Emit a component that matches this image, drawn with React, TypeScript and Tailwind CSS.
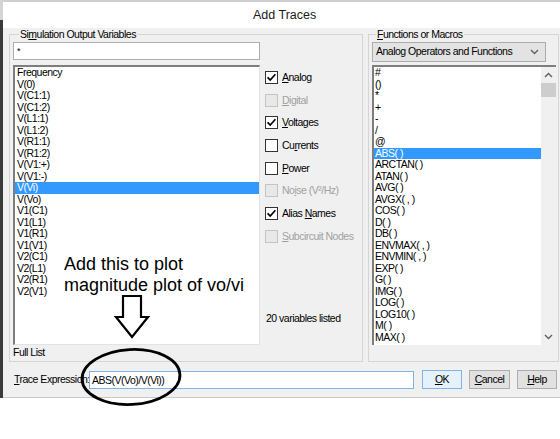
import React from "react";

const leftItems = ["Frequency","V(0)","V(C1:1)","V(C1:2)","V(L1:1)","V(L1:2)","V(R1:1)","V(R1:2)","V(V1:+)","V(V1:-)","V(Vi)","V(Vo)","V1(C1)","V1(L1)","V1(R1)","V1(V1)","V2(C1)","V2(L1)","V2(R1)","V2(V1)"];
const rightItems = ["#","()","*","+","-","/","@","ABS( )","ARCTAN( )","ATAN( )","AVG( )","AVGX( , )","COS( )","D( )","DB( )","ENVMAX( , )","ENVMIN( , )","EXP( )","G( )","IMG( )","LOG( )","LOG10( )","M( )","MAX( )"];

function Check({ checked, disabled, children }: { checked?: boolean; disabled?: boolean; children: React.ReactNode }) {
  return (
    <div className="flex items-center h-[13px] gap-[4px] whitespace-nowrap">
      <div className={`w-[13px] h-[13px] border flex items-center justify-center shrink-0 ${disabled ? "border-[#c4c4c4] bg-[#e8e8e8]" : "border-[#333333] bg-white"}`}>
        {checked && (
          <svg width="11" height="11" viewBox="0 0 11 11">
            <path d="M1.6 5.4 L4.2 8.1 L9.4 2.2" fill="none" stroke="#000" strokeWidth="1.7" />
          </svg>
        )}
      </div>
      <span className={`leading-[13px] ${disabled ? "text-[#a0a0a0]" : ""}`}>{children}</span>
    </div>
  );
}

function Chevron({ up }: { up?: boolean }) {
  return (
    <svg width="9" height="6" viewBox="0 0 9 6">
      <path d={up ? "M1 5 L4.5 1.5 L8 5" : "M1 1 L4.5 4.5 L8 1"} fill="none" stroke="#606060" strokeWidth="1.4" />
    </svg>
  );
}

export default function App() {
  return (
    <div className="relative w-[560px] h-[439px] bg-white overflow-hidden text-[10.5px] tracking-[-0.5px] text-black whitespace-nowrap font-['Liberation_Sans',Arial,sans-serif]">
      <div className="flex h-[398px]">
        <div className="w-[3px] flex flex-col">
          <div className="h-[20px] bg-[#d4d4d4]" />
          <div className="flex-1 bg-[#3a3a3a]" />
        </div>
        <div className="flex-1 flex flex-col border-b border-[#c9c9c9]">
          <div className="h-[28px] bg-white border-t-2 border-[#cfcfcf] flex items-center pl-[250px]">
            <span className="text-[12.5px] tracking-normal text-[#1a1a1a]">Add Traces</span>
          </div>
          <div className="flex-1 bg-[#f0f0f0] flex flex-col">
            <div className="flex pl-[6px] gap-[5px] h-[334px]">
              {/* Left group */}
              <fieldset className="w-[354px] border border-[#d5d5d5] flex flex-col pl-[3px] pb-[3px]">
                <legend className="ml-[6px] px-[1px] leading-[12px]">Si<u>m</u>ulation Output Variables</legend>
                <div className="flex flex-1 gap-[5px]">
                  <div className="w-[247px] flex flex-col">
                    <div className="mt-[2px] h-[18px] bg-white border border-[#abadb3] pl-[3px] leading-[16px] text-[9px]">*</div>
                    <div className="mt-[5px] h-[280px] bg-white border-l-2 border-t-2 border-[#7e7e7e] border-r border-b border-r-[#e3e3e3] border-b-[#e3e3e3] flex flex-col">
                      {leftItems.map((t) => (
                        <div key={t} className={`h-[11.5px] leading-[11.5px] pl-[2px] ${t === "V(Vi)" ? "bg-[#3399ff] text-white" : ""}`}>{t}</div>
                      ))}
                    </div>
                    <div className="mt-[1px] leading-[12px]">Full List</div>
                  </div>
                  <div className="flex-1 flex flex-col pt-[31px] gap-[9.7px]">
                    <Check checked><u>A</u>nalog</Check>
                    <Check disabled><u>D</u>igital</Check>
                    <Check checked><u>V</u>oltages</Check>
                    <Check>Cu<u>r</u>rents</Check>
                    <Check><u>P</u>ower</Check>
                    <Check disabled>No<u>i</u>se (V²/Hz)</Check>
                    <Check checked>Alias <u>N</u>ames</Check>
                    <Check disabled><u>S</u>ubcircuit Nodes</Check>
                    <div className="mt-auto mb-[34px] pl-[1px] leading-[12px]">20 variables listed</div>
                  </div>
                </div>
              </fieldset>
              {/* Right group */}
              <fieldset className="w-[191px] border border-[#d5d5d5] flex flex-col pl-[3px] pr-[2px]">
                <legend className="ml-[4px] px-[1px] leading-[12px]"><u>F</u>unctions or Macros</legend>
                <div className="mt-[2px] w-[174px] h-[20px] bg-[#e3e3e3] border border-[#acacac] flex items-center justify-between pl-[3px] pr-[6px]">
                  <span>Analog Operators and Functions</span>
                  <Chevron />
                </div>
                <div className="mt-[3px] h-[280px] bg-white border-l-2 border-t-2 border-[#7e7e7e] flex">
                  <div className="flex-1 flex flex-col overflow-hidden">
                    {rightItems.map((t) => (
                      <div key={t} className={`h-[11.5px] leading-[11.5px] pl-[1px] ${t === "ABS( )" ? "bg-[#3399ff] text-white" : ""}`}>{t}</div>
                    ))}
                  </div>
                  <div className="w-[15px] bg-[#f0f0f0] flex flex-col items-center">
                    <div className="h-[16px] flex items-center justify-center"><Chevron up /></div>
                    <div className="w-[15px] h-[14px] bg-[#cdcdcd]" />
                    <div className="flex-1" />
                    <div className="h-[16px] flex items-center justify-center"><Chevron /></div>
                  </div>
                </div>
              </fieldset>
            </div>
            <div className="flex-1 flex items-center pl-[11px]">
              <div className="w-[75px]"><u>T</u>race Expression:</div>
              <div className="w-[325px] h-[18px] bg-white border border-[#7eb4ea] pl-[2px] leading-[16px]">ABS(V(Vo)/V(Vi))</div>
              <div className="ml-[8px] w-[40px] h-[19px] bg-[#e5f1fb] border border-[#7eb4ea] flex items-center justify-center"><span><u>O</u>K</span></div>
              <div className="ml-[7px] w-[41px] h-[19px] bg-[#e1e1e1] border border-[#adadad] flex items-center justify-center"><span><u>C</u>ancel</span></div>
              <div className="ml-[7px] w-[40px] h-[19px] bg-[#e1e1e1] border border-[#adadad] flex items-center justify-center"><span><u>H</u>elp</span></div>
            </div>
          </div>
        </div>
      </div>

      {/* Annotation overlay */}
      <div className="absolute left-[64px] top-[254px] text-[18px] leading-[21px] tracking-normal text-black">
        <div>Add this to plot</div>
        <div>magnitude plot of vo/vi</div>
      </div>
      <svg className="absolute left-0 top-0" width="560" height="439" viewBox="0 0 560 439">
        <path d="M123 296 L141 296 L141 317 L148 317 L132 337 L116 317 L123 317 Z" fill="white" stroke="black" strokeWidth="2.2" strokeLinejoin="miter" />
        <ellipse cx="131" cy="377" rx="49" ry="27.5" fill="none" stroke="black" strokeWidth="2.8" transform="rotate(-3 131 377)" />
      </svg>
    </div>
  );
}
